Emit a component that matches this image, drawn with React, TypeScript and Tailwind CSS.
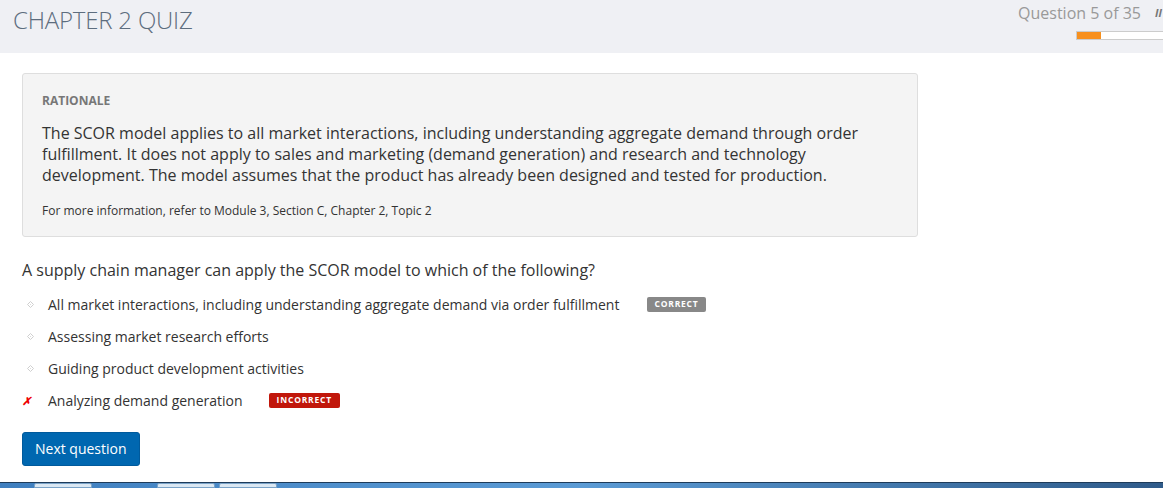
import React from 'react'

const options = [
  { text: 'All market interactions, including understanding aggregate demand via order fulfillment', badge: 'correct' },
  { text: 'Assessing market research efforts' },
  { text: 'Guiding product development activities' },
  { text: 'Analyzing demand generation', badge: 'incorrect', wrong: true },
]

function Diamond() {
  return (
    <svg width="7" height="7" viewBox="0 0 7 7" className="block">
      <path d="M3.5 0.5 L6.5 3.5 L3.5 6.5 L0.5 3.5 Z" fill="none" stroke="#cfcfcf" strokeWidth="1" />
      <rect x="3" y="3" width="1" height="1" fill="#dcdcdc" />
    </svg>
  )
}

export default function App() {
  return (
    <div className="w-[1163px] h-[488px] overflow-hidden bg-white flex flex-col font-['Open_Sans',sans-serif] text-[#333]">
      {/* header */}
      <div className="h-[53px] shrink-0 bg-[#eff0f4] flex justify-between">
        <h1 className="pl-[13px] pt-[4px] text-[24px] font-light text-[#5d6d7e] leading-[32px] tracking-[-0.2px]">CHAPTER 2 QUIZ</h1>
        <div className="flex flex-col items-end pt-[3px]">
          <div className="flex items-center gap-[14px] text-[16px] text-[#999] leading-[20px]">
            <span>Question 5 of 35</span>
            <span className="italic font-bold text-[11px] text-[#777] w-[8px] overflow-hidden">Il</span>
          </div>
          <div className="mt-[8px] w-[87px] h-[9px] border border-[#ccc] border-r-0 bg-white flex">
            <div className="w-[24px] h-full bg-[#f7901e]" />
          </div>
        </div>
      </div>

      <div className="flex-1 px-[22px] pt-[20px]">
        {/* rationale */}
        <div className="w-[896px] h-[164px] bg-[#f4f4f4] border border-[#dedede] rounded-[3px] px-[19px] pt-[19px]">
          <div className="text-[12px] font-bold text-[#777] leading-[16px]">RATIONALE</div>
          <p className="mt-[14px] text-[16px] leading-[21px] text-[#333]">
            The SCOR model applies to all market interactions, including understanding aggregate demand through order fulfillment. It does not apply to sales and marketing (demand generation) and research and technology development. The model assumes that the product has already been designed and tested for production.
          </p>
          <p className="mt-[17px] text-[12px] leading-[16px] text-[#333]">For more information, refer to Module 3, Section C, Chapter 2, Topic 2</p>
        </div>

        {/* question */}
        <div className="mt-[22px] text-[16px] leading-[22px] text-[#333]">A supply chain manager can apply the SCOR model to which of the following?</div>

        <ul className="mt-[7px] flex flex-col">
          {options.map((o) => (
            <li key={o.text} className="h-[32px] flex items-center text-[14px] text-[#333]">
              <span className="w-[26px] flex items-center">
                {o.wrong ? (
                  <span className="text-[#e00] text-[11px] font-bold italic leading-none">✗</span>
                ) : (
                  <span className="pl-[5px]"><Diamond /></span>
                )}
              </span>
              <span>{o.text}</span>
              {o.badge === 'correct' && (
                <span className="ml-[28px] h-[15px] px-[7px] rounded-[2px] bg-[#888] text-white text-[8.5px] font-bold tracking-[0.8px] flex items-center">CORRECT</span>
              )}
              {o.badge === 'incorrect' && (
                <span className="ml-[26px] h-[15px] px-[8px] rounded-[2px] bg-[#c1170b] text-white text-[8.5px] font-bold tracking-[0.8px] flex items-center">INCORRECT</span>
              )}
            </li>
          ))}
        </ul>

        <button className="mt-[16px] h-[34px] px-[12px] rounded-[3px] bg-[#0067b0] border border-[#005a9c] text-white text-[14px] leading-none">Next question</button>
      </div>

      {/* taskbar sliver */}
      <div className="h-[6px] shrink-0 border-t border-[#1d3b5a] bg-gradient-to-r from-[#3f7fbf] via-[#5b9bd5] to-[#2f5b8a] flex items-start">
        <div className="w-[34px]" />
        <div className="w-[58px] h-full bg-[#dbe8f3] border border-[#7aa3c8] rounded-t-[2px]" />
        <div className="w-[65px]" />
        <div className="w-[58px] h-full bg-[#dbe8f3] border border-[#7aa3c8] rounded-t-[2px]" />
        <div className="w-[4px]" />
        <div className="w-[58px] h-full bg-[#dbe8f3] border border-[#7aa3c8] rounded-t-[2px]" />
      </div>
    </div>
  )
}
